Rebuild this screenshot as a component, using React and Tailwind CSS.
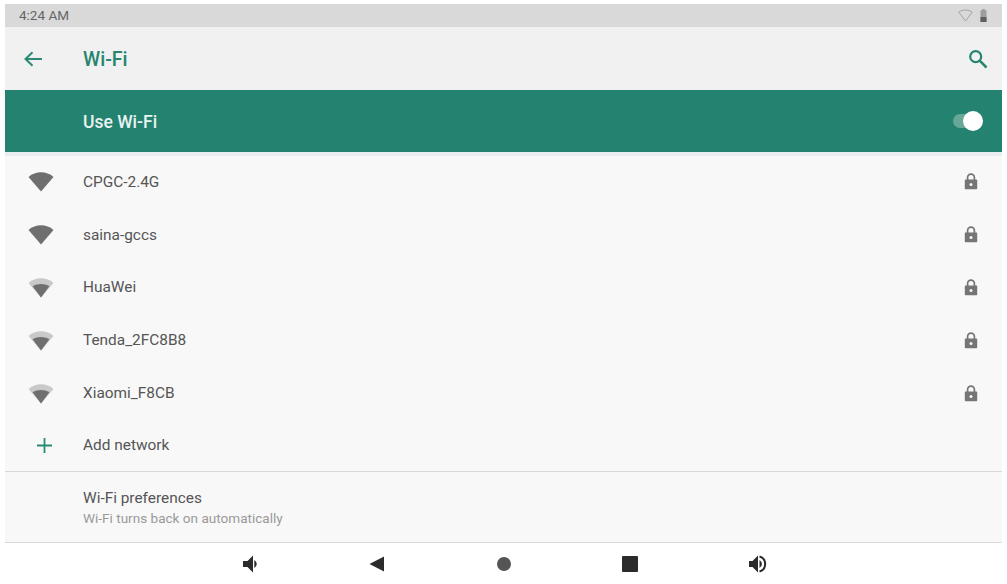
import React from "react";

const font = { fontFamily: "Roboto, sans-serif" };

function Wifi({ level }) {
  return (
    <svg width="26" height="20" viewBox="0 0 26 20" className="block">
      <path d="M0.5 5 C7.5 -1.200 18.5 -1.200 25.5 5 L13 19.5 Z" fill={level === 4 ? "#6f6f6f" : "#c9c9c9"} />
      {level < 4 && <path d="M4.6 8.2 C9.5 5.2 16.5 5.2 21.4 8.2 L13 19.5 Z" fill="#6f6f6f" />}
    </svg>
  );
}

function Lock() {
  return (
    <svg width="14" height="17" viewBox="0 0 14 17" className="block">
      <path d="M3.6 7V4.6a3.4 3.4 0 0 1 6.8 0V7" fill="none" stroke="#757575" strokeWidth="1.7" />
      <path d="M1.5 6.5h11a.7.7 0 0 1 .7.7v8.4a.7.7 0 0 1-.7.7h-11a.7.7 0 0 1-.7-.7V7.200a.7.7 0 0 1 .7-.7z" fill="#757575" />
      <circle cx="7" cy="11.400" r="1.500" fill="#f8f8f8" />
    </svg>
  );
}

function Row({ name, level }) {
  return (
    <div className="h-[52.8px] flex items-center">
      <div className="w-[78px] pl-[23px] shrink-0"><Wifi level={level} /></div>
      <div className="flex-1 text-[15.4px] text-[#555555]">{name}</div>
      <div className="pr-[24px] pb-[1px]"><Lock /></div>
    </div>
  );
}

export default function App() {
  const nets = [
    ["CPGC-2.4G", 4],
    ["saina-gccs", 4],
    ["HuaWei", 3],
    ["Tenda_2FC8B8", 3],
    ["Xiaomi_F8CB", 3],
  ];
  return (
    <div className="w-[1007px] h-[584px] bg-white pt-[4px] px-[5px] overflow-hidden" style={font}>
      <div className="w-[997px] h-full flex flex-col">
        <div className="h-[23px] shrink-0 bg-[#d9d9d9] flex items-center justify-between pl-[14px] pr-[15px]">
          <span className="text-[13.5px] text-[#666666]">4:24 AM</span>
          <div className="flex items-center gap-[7px]">
            <svg width="15" height="13" viewBox="0 0 15 13">
              <path d="M0.800 3.200C4.500 .3 10.500 .3 14.200 3.200L7.500 12Z" fill="none" stroke="#a3a3a3" strokeWidth="1" />
            </svg>
            <svg width="7" height="13" viewBox="0 0 7 13">
              <path d="M2.200 0h2.600v1.200H6.500V13H.5V1.200h1.700Z" fill="#9e9e9e" />
              <rect x=".5" y="8" width="6" height="5" fill="#5f5f5f" />
            </svg>
          </div>
        </div>

        <div className="h-[63px] shrink-0 bg-[#f1f1f1] flex items-center">
          <div className="w-[78px] pl-[18px] shrink-0">
            <svg width="20" height="18" viewBox="0 0 20 18">
              <path d="M19 9H3M9.500 2.200 2.500 9l7 6.800" fill="none" stroke="#2a8a75" strokeWidth="2" />
            </svg>
          </div>
          <div className="flex-1 text-[19.5px] font-medium text-[#26856f] pt-[2px]">Wi-Fi</div>
          <div className="pr-[14px]">
            <svg width="20" height="20" viewBox="0 0 20 20" className="block">
              <circle cx="7.700" cy="7.700" r="5.500" fill="none" stroke="#26856f" strokeWidth="2.200" />
              <path d="M11.700 11.700 18.500 18.500" stroke="#26856f" strokeWidth="2.500" />
            </svg>
          </div>
        </div>

        <div className="h-[62px] shrink-0 bg-[#248270] flex items-center">
          <div className="pl-[78px] flex-1 text-[17.5px] font-medium text-[#e9f3f0] pt-[2px]">Use Wi-Fi</div>
          <div className="relative w-[30px] h-[20px] mr-[19px] flex items-center">
            <div className="w-[28px] h-[14px] rounded-full bg-[#66a798]" />
            <div className="absolute right-0 top-0 w-[20px] h-[20px] rounded-full bg-white" />
          </div>
        </div>

        <div className="flex-1 bg-[#f8f8f8] flex flex-col">
          <div className="h-[4px] shrink-0 bg-[#e9eef0]" />
          <div className="flex flex-col">
            {nets.map(([n, l]) => <Row key={n} name={n} level={l} />)}
          </div>
          <div className="h-[51px] flex items-center shrink-0">
            <div className="w-[78px] pl-[32px] shrink-0">
              <svg width="15" height="15" viewBox="0 0 15 15" className="block">
                <path d="M7.500 0v15M0 7.500h15" stroke="#2a8a75" strokeWidth="1.800" />
              </svg>
            </div>
            <div className="text-[15.4px] text-[#555555]">Add network</div>
          </div>
          <div className="flex-1 border-t border-b border-[#d8d8d8] pl-[78px] flex flex-col pt-[16px]">
            <div className="text-[15.4px] leading-[20px] text-[#555555]">Wi-Fi preferences</div>
            <div className="text-[13.55px] leading-[18px] mt-[1px] text-[#9a9a9a]">Wi-Fi turns back on automatically</div>
          </div>
        </div>

        <div className="h-[41px] shrink-0 bg-white flex items-center relative pl-[238px] gap-[112px]">
          <svg width="18" height="18" viewBox="0 0 18 18" className="shrink-0">
            <path d="M0 6h4.500L10 .5v17l-5.500-5.500H0Z" fill="#2b2b2b" />
            <path d="M11.300 5a4.500 4.500 0 0 1 0 8Z" fill="#2b2b2b" />
          </svg>
          <svg width="16" height="16" viewBox="0 0 16 16" className="shrink-0 ml-[-4px]">
            <path d="M15 .5v15L.5 8Z" fill="#2b2b2b" />
          </svg>
          <svg width="14" height="14" viewBox="0 0 14 14" className="shrink-0">
            <circle cx="7" cy="7" r="7" fill="#555555" />
          </svg>
          <svg width="16" height="16" viewBox="0 0 16 16" className="shrink-0 ml-[-1px]">
            <rect width="16" height="16" rx="1" fill="#2b2b2b" />
          </svg>
          <svg width="20" height="18" viewBox="0 0 20 18" className="shrink-0 ml-[-1px]">
            <path d="M0 6h3.500L9 .5v17l-5.500-5.500H0Z" fill="#2b2b2b" />
            <path d="M10.500 5a4.500 4.500 0 0 1 0 8Z" fill="#2b2b2b" />
            <path d="M10.500 1.500a7.800 7.800 0 0 1 0 15" fill="none" stroke="#2b2b2b" strokeWidth="2" />
          </svg>
        </div>
      </div>
    </div>
  );
}
